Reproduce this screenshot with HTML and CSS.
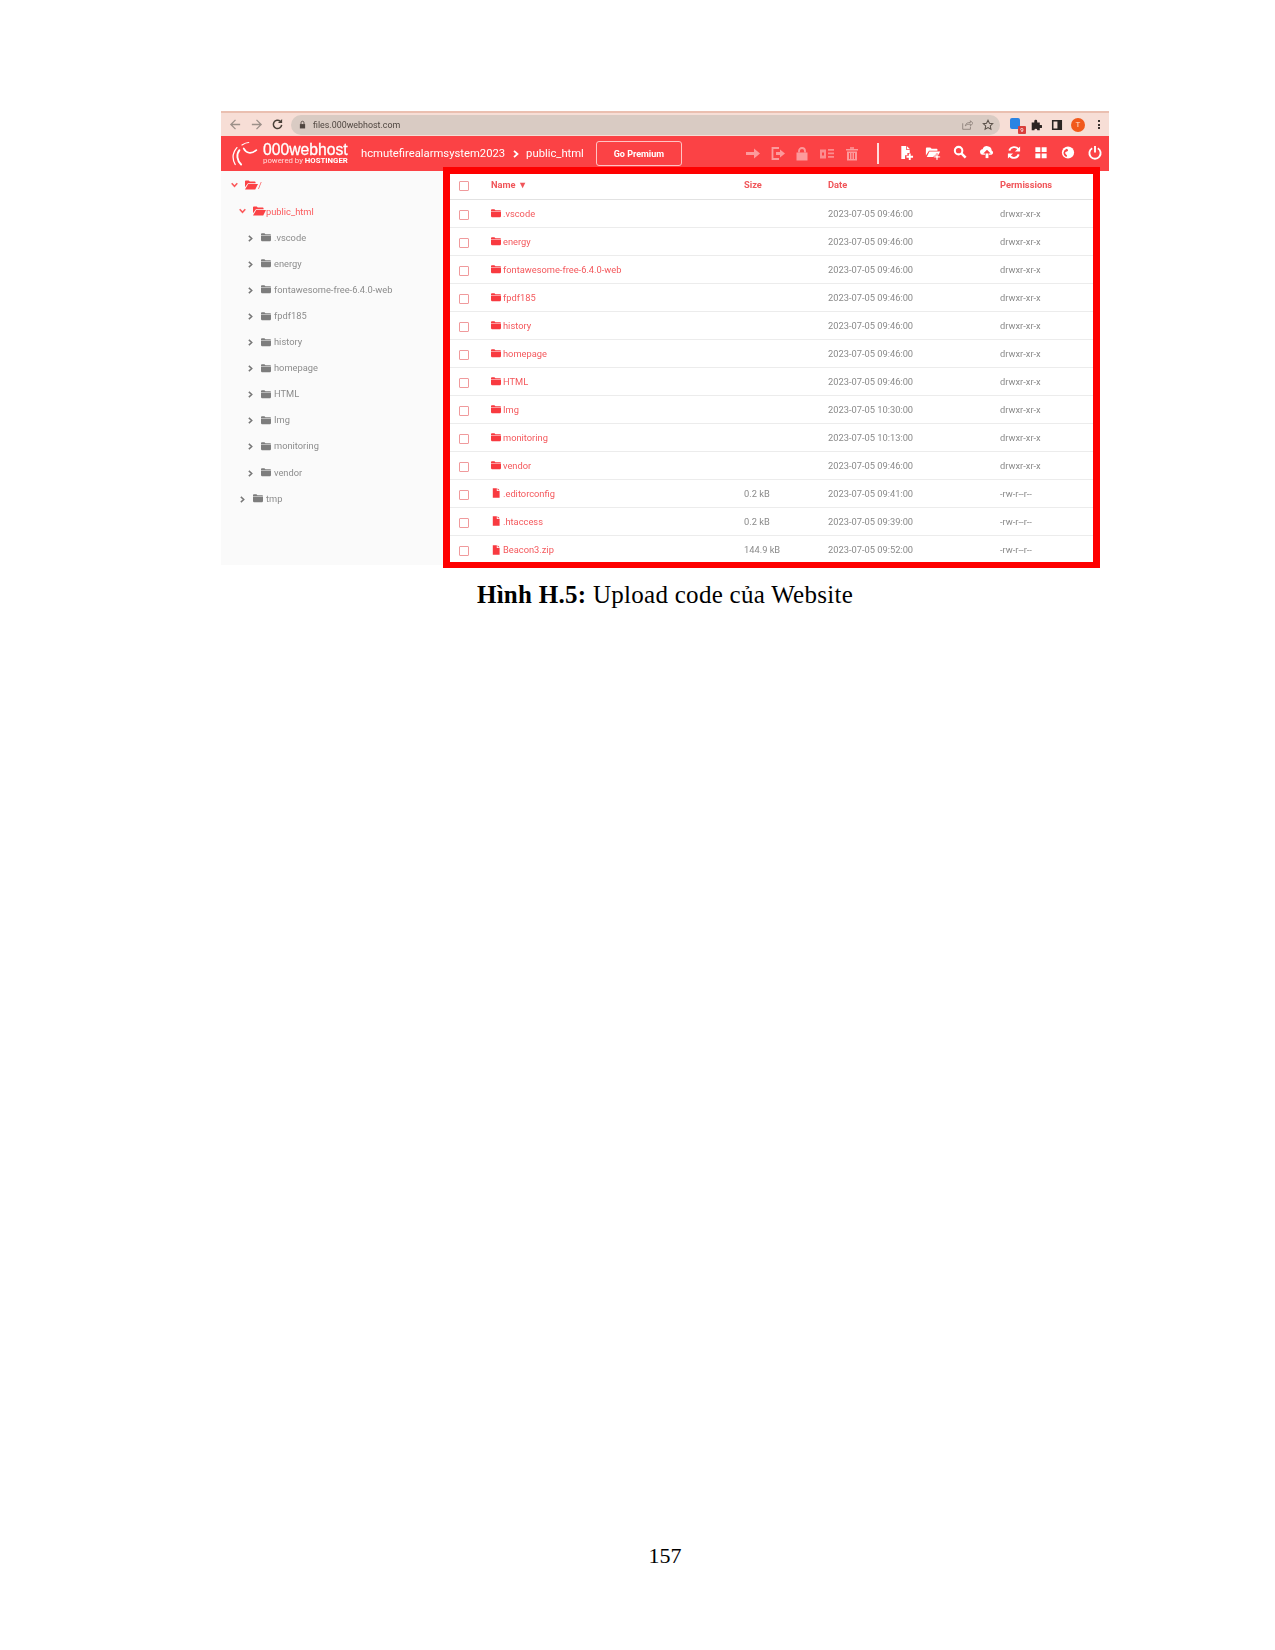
FILE: index.html
```
<!DOCTYPE html>
<html lang="vi">
<head>
<meta charset="utf-8">
<title>Upload code của Website</title>
<link rel="stylesheet" href="styles.css">
</head>
<body>
<svg class="defs" width="0" height="0" aria-hidden="true">
  <symbol id="folder" viewBox="0 0 14 12"><path d="M0 2C0 1.200.5.6 1.200.6h3.600L6.200 2h6.600c.7 0 1.200.5 1.200 1.100V3.900H0z M0 4.700h14v6c0 .7-.5 1.100-1.200 1.100H1.200C.5 11.800 0 11.400 0 10.700z"/></symbol>
  <symbol id="folder-open" viewBox="0 0 16 12"><path d="M0 1.500C0 .8.5.4 1.100.4h3.500l1.300 1.300h6c.6 0 1.100.4 1.100 1v1.200H3.600L0 8.800z M3.900 4.800H16l-3.400 6.800H0z"/></symbol>
  <symbol id="file" viewBox="0 0 10 12"><path d="M1 0h5v3.500h3.500V12H1z M7 0l2.500 2.500H7z"/></symbol>
  <symbol id="chev-r" viewBox="0 0 6 8"><path d="M1 .8 4.500 4 1 7.200" fill="none" stroke="currentColor" stroke-width="1.800"/></symbol>
  <symbol id="chev-d" viewBox="0 0 8 6"><path d="M.8 1 4 4.500 7.200 1" fill="none" stroke="currentColor" stroke-width="1.800"/></symbol>
</svg>

<main class="page">
  <figure class="figure">
    <div class="shot">
      <div class="chrome">
        <svg class="c-ic faint" viewBox="0 0 14 14"><path d="M12 7H2.500M7 2 2 7l5 5" fill="none" stroke="currentColor" stroke-width="1.400"/></svg>
        <svg class="c-ic faint" viewBox="0 0 14 14"><path d="M2 7h9.500M7 2l5 5-5 5" fill="none" stroke="currentColor" stroke-width="1.400"/></svg>
        <svg class="c-ic" viewBox="0 0 14 14"><path d="M11.500 7.500A4.500 4.500 0 1 1 10 3.500" fill="none" stroke="currentColor" stroke-width="1.600"/><path d="M12 1v4.500H7.500z" fill="currentColor"/></svg>
        <div class="omnibox">
          <svg class="lock" viewBox="0 0 8 10"><path d="M1 4.500h6V9.500H1z" fill="currentColor"/><path d="M2.300 4.500V3a1.700 1.700 0 0 1 3.400 0v1.500" fill="none" stroke="currentColor"/></svg>
          <span class="url">files.000webhost.com</span>
          <svg class="o-ic" viewBox="0 0 14 14"><path d="M2 5v7h9V9M5 8c.5-3 3-4 6-4V2l3 3-3 3V6C8.500 6 6.500 6.500 5 8z" fill="none" stroke="currentColor"/></svg>
          <svg class="o-ic star" viewBox="0 0 14 14"><path d="M7 1.500 8.700 5l3.800.5-2.800 2.600.7 3.800L7 10l-3.400 1.900.7-3.800L1.500 5.500 5.300 5z" fill="none" stroke="currentColor" stroke-width="1.200"/></svg>
        </div>
        <div class="ext">
          <span class="ext-blue"></span><span class="ext-badge">9</span>
        </div>
        <svg class="c-ic2 puzzle" viewBox="0 0 14 14"><path d="M5 2.500a1.700 1.700 0 0 1 3.400 0V4h3v3H13a1.500 1.500 0 0 1 0 3.400h-1.600V13H8.500a1.700 1.700 0 0 0-3.400 0H2V4h3z" fill="currentColor"/></svg>
        <svg class="c-ic2 panel" viewBox="0 0 14 14"><path d="M2 2h10v10H2z" fill="none" stroke="currentColor" stroke-width="1.800"/><path d="M7.500 2H12v10H7.500z" fill="currentColor"/></svg>
        <span class="avatar">T</span>
        <span class="kebab"><i></i><i></i><i></i></span>
      </div>

      <header class="bar">
        <div class="logo">
          <svg class="swirl" viewBox="0 0 34 32"><g fill="none" stroke="#fff" stroke-linecap="round"><path d="M6 29C2 22 3 15 8 9" stroke-width="1.500"/><path d="M13 29C8 24 7 17 11 12" stroke-width="2.200"/><path d="M16 10c3 6 9 7 15 2" stroke-width="2"/><path d="M14 6c3-2 5-3 8-3" stroke-width="1.300"/></g></svg>
          <div class="logo-words">
            <span class="logo-name">000webhost</span>
            <span class="logo-sub">powered by <b>HOSTINGER</b></span>
          </div>
        </div>
        <nav class="crumbs">
          <span>hcmutefirealarmsystem2023</span>
          <svg class="crumb-sep" viewBox="0 0 6 8"><use href="#chev-r"/></svg>
          <span>public_html</span>
        </nav>
        <button class="premium">Go Premium</button>
        <div class="tools tools-off">
          <svg viewBox="0 0 16 14"><path d="M1 5.500h8V2l6 5-6 5V8.500H1z"/></svg>
          <svg viewBox="0 0 16 14"><path d="M9 1.500H2.500v11H9" fill="none" stroke="currentColor" stroke-width="1.800"/><path d="M6 5.500h4V3l5 4-5 4V8.500H6z"/></svg>
          <svg viewBox="0 0 16 14"><path d="M2.500 6h11v8h-11z"/><path d="M5 6V4.500a3 3 0 0 1 6 0V6" fill="none" stroke="currentColor" stroke-width="1.800"/></svg>
          <svg viewBox="0 0 16 14"><path d="M1 3h6v9H1zM9 2.500h6v1.800H9zM9 6h6v1.800H9zM9 9.500h6v1.800H9z" opacity=".85"/><path d="M3 6h2v3H3z" fill="#fb4245"/></svg>
          <svg viewBox="0 0 16 14"><path d="M2 2.500h12v1.500H2zM6 .8h4v1.500H6z"/><path d="M3 5h10v9H3z"/><path d="M5.500 6.500v6M8 6.500v6M10.500 6.500v6" stroke="#fb4245"/></svg>
        </div>
        <span class="tool-sep"></span>
        <div class="tools tools-on">
          <svg viewBox="0 0 16 16"><path d="M3 1h5v4h4v3.500H9.500V11H7v4H3z"/><path d="M8.800 1 12 4.300H8.800z"/><path d="M11 9v2.500H8.500V13.500H11V16h2v-2.500h2.500v-2H13V9z"/></svg>
          <svg viewBox="0 0 18 16"><path d="M1 3.500c0-.8.4-1.200 1-1.200h4l1.500 1.500H13c.7 0 1 .5 1 1V6H4.500L1 11.500z"/><path d="M5 7h12l-3 6H2z"/><path d="M12.500 9.500v2.500H10v2h2.500V16.500h2V14H17v-2h-2.500V9.500z" stroke="#fb4245" stroke-width=".6"/></svg>
          <svg viewBox="0 0 16 16"><circle cx="6.500" cy="6" r="4" fill="none" stroke="currentColor" stroke-width="2.200"/><path d="m9.500 9 4.500 4.500" stroke="currentColor" stroke-width="2.600"/></svg>
          <svg viewBox="0 0 16 16"><path d="M3.800 10.500a3 3 0 0 1-.5-6A5 5 0 0 1 13 5.800a2.500 2.500 0 0 1-.3 4.700H10V9h2L8 5 4 9h2v1.500z"/><path d="M6.500 9h3v5h-3z"/></svg>
          <svg viewBox="0 0 16 16"><path d="M13 5A5.500 5.500 0 0 0 3 6M3 11a5.500 5.500 0 0 0 10-1" fill="none" stroke="currentColor" stroke-width="2"/><path d="M14.500 1.500V7H9zM1.500 14.500V9H7z"/></svg>
          <svg viewBox="0 0 16 16"><path d="M2 2.500h5.300v5H2zM8.700 2.500H14v5H8.700zM2 9h5.300v5H2zM8.700 9H14v5H8.700z"/></svg>
          <svg viewBox="0 0 16 16"><circle cx="8" cy="8" r="6.500"/><path d="M6.500 4c1.500.5 2 1.500 1.200 2.500S5 7 5 8.500s1.800 1.500 2 3l-.6 1.300A5 5 0 0 1 3.200 8a5 5 0 0 1 3.300-4z" fill="#fb4245"/></svg>
          <svg viewBox="0 0 16 16"><path d="M5 3.500a6 6 0 1 0 6 0" fill="none" stroke="currentColor" stroke-width="2"/><path d="M7 1h2v7H7z"/></svg>
        </div>
      </header>

      <div class="body">
        <aside class="tree">
          <div class="node lvl0 open"><svg class="chev"><use href="#chev-d"/></svg><svg class="tf open-f"><use href="#folder-open"/></svg><span>/</span></div>
          <div class="node lvl1 open"><svg class="chev"><use href="#chev-d"/></svg><svg class="tf open-f"><use href="#folder-open"/></svg><span>public_html</span></div>
          <div class="node lvl2"><svg class="chev r"><use href="#chev-r"/></svg><svg class="tf"><use href="#folder"/></svg><span>.vscode</span></div>
          <div class="node lvl2"><svg class="chev r"><use href="#chev-r"/></svg><svg class="tf"><use href="#folder"/></svg><span>energy</span></div>
          <div class="node lvl2"><svg class="chev r"><use href="#chev-r"/></svg><svg class="tf"><use href="#folder"/></svg><span>fontawesome-free-6.4.0-web</span></div>
          <div class="node lvl2"><svg class="chev r"><use href="#chev-r"/></svg><svg class="tf"><use href="#folder"/></svg><span>fpdf185</span></div>
          <div class="node lvl2"><svg class="chev r"><use href="#chev-r"/></svg><svg class="tf"><use href="#folder"/></svg><span>history</span></div>
          <div class="node lvl2"><svg class="chev r"><use href="#chev-r"/></svg><svg class="tf"><use href="#folder"/></svg><span>homepage</span></div>
          <div class="node lvl2"><svg class="chev r"><use href="#chev-r"/></svg><svg class="tf"><use href="#folder"/></svg><span>HTML</span></div>
          <div class="node lvl2"><svg class="chev r"><use href="#chev-r"/></svg><svg class="tf"><use href="#folder"/></svg><span>Img</span></div>
          <div class="node lvl2"><svg class="chev r"><use href="#chev-r"/></svg><svg class="tf"><use href="#folder"/></svg><span>monitoring</span></div>
          <div class="node lvl2"><svg class="chev r"><use href="#chev-r"/></svg><svg class="tf"><use href="#folder"/></svg><span>vendor</span></div>
          <div class="node lvl1 tmp"><svg class="chev r"><use href="#chev-r"/></svg><svg class="tf"><use href="#folder"/></svg><span>tmp</span></div>
        </aside>
        <section class="list">
          <div class="row head"><span class="box"></span><span class="c-name">Name ▼</span><span class="c-size">Size</span><span class="c-date">Date</span><span class="c-perm">Permissions</span></div>
          <div class="row"><span class="box"></span><span class="c-name"><svg class="fi"><use href="#folder"/></svg>.vscode</span><span class="c-size"></span><span class="c-date">2023-07-05 09:46:00</span><span class="c-perm">drwxr-xr-x</span></div>
          <div class="row"><span class="box"></span><span class="c-name"><svg class="fi"><use href="#folder"/></svg>energy</span><span class="c-size"></span><span class="c-date">2023-07-05 09:46:00</span><span class="c-perm">drwxr-xr-x</span></div>
          <div class="row"><span class="box"></span><span class="c-name"><svg class="fi"><use href="#folder"/></svg>fontawesome-free-6.4.0-web</span><span class="c-size"></span><span class="c-date">2023-07-05 09:46:00</span><span class="c-perm">drwxr-xr-x</span></div>
          <div class="row"><span class="box"></span><span class="c-name"><svg class="fi"><use href="#folder"/></svg>fpdf185</span><span class="c-size"></span><span class="c-date">2023-07-05 09:46:00</span><span class="c-perm">drwxr-xr-x</span></div>
          <div class="row"><span class="box"></span><span class="c-name"><svg class="fi"><use href="#folder"/></svg>history</span><span class="c-size"></span><span class="c-date">2023-07-05 09:46:00</span><span class="c-perm">drwxr-xr-x</span></div>
          <div class="row"><span class="box"></span><span class="c-name"><svg class="fi"><use href="#folder"/></svg>homepage</span><span class="c-size"></span><span class="c-date">2023-07-05 09:46:00</span><span class="c-perm">drwxr-xr-x</span></div>
          <div class="row"><span class="box"></span><span class="c-name"><svg class="fi"><use href="#folder"/></svg>HTML</span><span class="c-size"></span><span class="c-date">2023-07-05 09:46:00</span><span class="c-perm">drwxr-xr-x</span></div>
          <div class="row"><span class="box"></span><span class="c-name"><svg class="fi"><use href="#folder"/></svg>Img</span><span class="c-size"></span><span class="c-date">2023-07-05 10:30:00</span><span class="c-perm">drwxr-xr-x</span></div>
          <div class="row"><span class="box"></span><span class="c-name"><svg class="fi"><use href="#folder"/></svg>monitoring</span><span class="c-size"></span><span class="c-date">2023-07-05 10:13:00</span><span class="c-perm">drwxr-xr-x</span></div>
          <div class="row"><span class="box"></span><span class="c-name"><svg class="fi"><use href="#folder"/></svg>vendor</span><span class="c-size"></span><span class="c-date">2023-07-05 09:46:00</span><span class="c-perm">drwxr-xr-x</span></div>
          <div class="row"><span class="box"></span><span class="c-name"><svg class="fi file"><use href="#file"/></svg>.editorconfig</span><span class="c-size">0.2 kB</span><span class="c-date">2023-07-05 09:41:00</span><span class="c-perm">-rw-r--r--</span></div>
          <div class="row"><span class="box"></span><span class="c-name"><svg class="fi file"><use href="#file"/></svg>.htaccess</span><span class="c-size">0.2 kB</span><span class="c-date">2023-07-05 09:39:00</span><span class="c-perm">-rw-r--r--</span></div>
          <div class="row last"><span class="box"></span><span class="c-name"><svg class="fi file"><use href="#file"/></svg>Beacon3.zip</span><span class="c-size">144.9 kB</span><span class="c-date">2023-07-05 09:52:00</span><span class="c-perm">-rw-r--r--</span></div>
        </section>
        <div class="scrollbar"></div>
      </div>
      <div class="callout"></div>
    </div>
    <figcaption class="caption"><b>Hình H.5:</b> Upload code của Website</figcaption>
  </figure>
  <footer class="pageno">157</footer>
</main>
</body>
</html>
```
FILE: styles.css
```
* { box-sizing: border-box; }
html, body { margin: 0; background: #fff; }
.defs { display: block; height: 0; }
svg { fill: currentColor; }

.page {
  height: 1650px;
  padding-top: 111px;
  padding-left: 55px;
  display: flex;
  flex-direction: column;
  align-items: center;
  font-family: "Liberation Serif", "Times New Roman", serif;
}
.figure { margin: 0; width: 888px; }

.shot {
  position: relative;
  width: 888px;
  height: 454px;
  font-family: Roboto, "Liberation Sans", sans-serif;
}
.shot > .chrome, .shot > .bar, .shot > .body { filter: blur(.5px); }

/* browser chrome */
.chrome {
  height: 25px;
  background: #f7ded6;
  border-top: 2px solid #eabfb0;
  display: flex;
  align-items: center;
  padding-left: 8px;
  color: #4a4038;
}
.c-ic { width: 13px; height: 13px; margin-right: 8px; flex: none; }
.c-ic.faint { color: #9c9089; }
.omnibox {
  width: 709px;
  height: 20px;
  margin-left: -1px;
  padding: 0 6px 0 8px;
  background: #d9cbc3;
  border-radius: 10px;
  display: flex;
  align-items: center;
  font-size: 8.900px;
  color: #4f4640;
}
.lock { width: 7px; height: 9px; margin-right: 7px; }
.url { flex: 1; }
.o-ic { width: 12px; height: 12px; color: #8b7f78; margin-left: 9px; }
.o-ic.star { color: #5a5049; }
.ext { position: relative; width: 14px; height: 13px; margin-left: 10px; margin-right: 6px; }
.ext-blue { display: block; width: 10px; height: 11px; background: #2b84e3; border-radius: 2px; }
.ext-badge {
  position: absolute; right: -2px; bottom: -3px;
  width: 8px; height: 8px;
  background: #d9403c; color: #fff;
  font-size: 6px; line-height: 8px; text-align: center;
  border-radius: 1px;
}
.c-ic2 { width: 12px; height: 12px; flex: none; color: #2b2523; }
.puzzle { margin-right: 9px; }
.panel { margin-right: 8px; }
.avatar {
  width: 14px; height: 14px; border-radius: 50%;
  background: #f1591c; color: #fde1d0;
  font-size: 8px; line-height: 14px; text-align: center;
  flex: none;
}
.kebab { display: flex; flex-direction: column; gap: 1.500px; margin-left: 13px; }
.kebab i { width: 2px; height: 2px; background: #3b3430; display: block; }

/* red app bar */
.bar {
  height: 35px;
  background: #fb4245;
  color: #fff;
  display: flex;
  align-items: center;
  padding-left: 9px;
}
.logo { display: flex; align-items: center; width: 131px; }
.swirl { width: 29px; height: 27px; flex: none; }
.logo-words { display: flex; flex-direction: column; margin-left: 4px; }
.logo-name { font-family: "Liberation Sans", sans-serif; font-size: 15.700px; line-height: 14px; -webkit-text-stroke: .3px #fff; white-space: nowrap; }
.logo-sub { font-size: 7.800px; line-height: 8px; color: #ffd8d8; white-space: nowrap; }
.logo-sub b { color: #fff; font-weight: 700; }
.crumbs { display: flex; align-items: center; font-size: 11.250px; white-space: nowrap; }
.crumb-sep { width: 6px; height: 8px; margin: 0 7.500px; }
.premium {
  width: 86px; height: 25px;
  margin-left: 12px;
  background: transparent;
  color: #fff;
  border: 1px solid #ffc4c4;
  border-radius: 3px;
  font: 700 9px Roboto, sans-serif;
  padding: 0;
}
.tools { display: flex; align-items: center; }
.tools svg { width: 16px; height: 15px; flex: none; }
.tools-off { margin-left: 63px; gap: 8.800px; color: #fc9a9c; }
.tool-sep { width: 1.500px; height: 21px; background: #ffdcdc; margin: 0 19px 0 17px; }
.tools-on { gap: 11px; padding-bottom: 2px; }

/* body */
.body { display: flex; height: 394px; position: relative; }
.tree {
  width: 222px;
  background: #fafafa;
  padding-top: 1px;
  font-size: 9.300px;
  color: #8c8c8c;
}
.node { height: 26.100px; display: flex; align-items: center; white-space: nowrap; }
.node.open { color: #fb5a5c; }
.lvl0 { padding-left: 10px; }
.lvl1 { padding-left: 18px; }
.lvl1.tmp { padding-left: 19px; }
.lvl2 { padding-left: 27px; }
.chev { width: 7px; height: 6px; flex: none; margin-right: 7px; }
.chev.r { width: 5px; height: 7px; margin-right: 8px; margin-top: 2px; color: #777; }
.tf { width: 10px; height: 10px; flex: none; margin-right: 3px; color: #7d7d7d; }
.tf.open-f { width: 13px; height: 10px; margin-right: 0; color: #fb4245; }

.list { width: 650px; background: #fff; }
.row {
  height: 28px;
  display: grid;
  grid-template-columns: 48px 253px 84px 172px 1fr;
  align-items: center;
  border-bottom: 1px solid #ececec;
  font-size: 9.300px;
  color: #8a8a8a;
  white-space: nowrap;
}
.row.last { border-bottom: 0; }
.row.head { color: #f0565a; font-weight: 700; border-bottom: 1px solid #e2e2e2; height: 28.500px; }
.box {
  width: 10px; height: 10px;
  margin-left: 16px;
  margin-top: 3px;
  border: 1px solid #f09a9c;
  border-radius: 1px;
  background: #fff;
}
.c-name { color: #f4585c; display: flex; align-items: center; }
.head .c-name { color: #f0565a; }
.fi { width: 10px; height: 10px; flex: none; margin-right: 2px; color: #f83a40; }
.fi.file { width: 8px; height: 10px; margin: 0 3px 0 1px; }
.scrollbar { width: 16px; background: #fff; border-left: 1px solid #f0f0f0; position: relative; }
.scrollbar::before { content: ""; display: block; width: 5px; height: 210px; margin-left: 1px; background: #c9c9c9; }

/* red annotation rectangle drawn on top of the screenshot */
.callout {
  position: absolute;
  left: 222px;
  top: 56px;
  width: 657px;
  height: 401px;
  border: 7px solid #fe0000;
  border-bottom-width: 6px;
}

.caption {
  margin-top: 14px;
  text-align: center;
  font-size: 25px;
  line-height: 31px;
  color: #000;
  letter-spacing: .28px;
}
.pageno {
  margin-top: 933px;
  font-size: 22px;
  line-height: 26px;
  color: #000;
}
```
